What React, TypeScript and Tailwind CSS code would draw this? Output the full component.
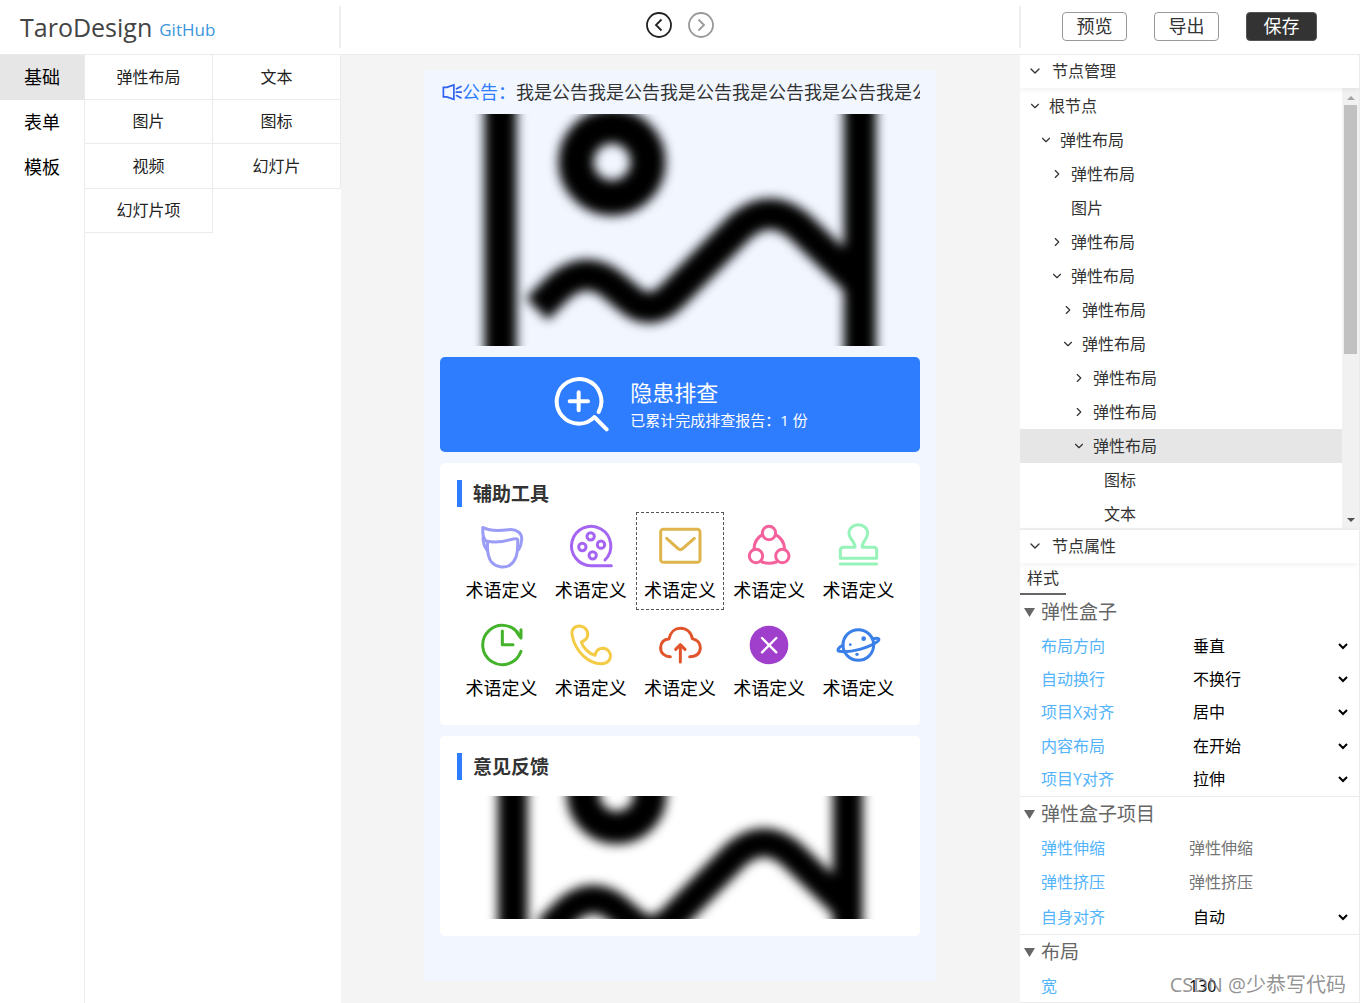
import React, { useId, useState } from 'react';
import { ChevronDown, ChevronRight } from 'lucide-react';

const categories = ['基础', '表单', '模板'];
const components = ['弹性布局', '文本', '图片', '图标', '视频', '幻灯片', '幻灯片项'];

type Node = { label: string; level: number; state?: 'open' | 'closed' };

const tree: Node[] = [
  { label: '根节点', level: 0, state: 'open' },
  { label: '弹性布局', level: 1, state: 'open' },
  { label: '弹性布局', level: 2, state: 'closed' },
  { label: '图片', level: 2 },
  { label: '弹性布局', level: 2, state: 'closed' },
  { label: '弹性布局', level: 2, state: 'open' },
  { label: '弹性布局', level: 3, state: 'closed' },
  { label: '弹性布局', level: 3, state: 'open' },
  { label: '弹性布局', level: 4, state: 'closed' },
  { label: '弹性布局', level: 4, state: 'closed' },
  { label: '弹性布局', level: 4, state: 'open' },
  { label: '图标', level: 5 },
  { label: '文本', level: 5 },
];

const indents = ['pl-2', 'pl-[19px]', 'pl-[30px]', 'pl-[41px]', 'pl-[52px]', 'pl-[63px]'];

function ToolIcon({ view, color, children }: { view: string; color: string; children: React.ReactNode }) {
  return (
    <svg
      viewBox={view}
      className="size-11 overflow-visible"
      fill="none"
      stroke={color}
      strokeWidth="9"
      strokeLinecap="round"
      strokeLinejoin="round"
      aria-hidden="true"
    >
      {children}
    </svg>
  );
}

const tools = [
  <ToolIcon key="head" view="117 165 132 132" color="#9a9cf6">
    <path d="M126 173C148 184 178 182 202 179C228 176 244 191 242 209C241 222 239 230 233 239" />
    <path d="M126 173C124 190 126 204 135 213C160 219 188 215 208 209Q229 204 230 209" />
    <path d="M140 215C138 240 140 262 152 277C165 292 190 295 206 286C223 274 232 255 230 209" />
    <path d="M126 202C126 220 130 230 138 240" />
  </ToolIcon>,
  <ToolIcon key="film" view="385 165 132 132" color="#a565f2">
    <path d="M493 270A59 59 0 1 0 453 287H512" />
    <circle cx="450" cy="199" r="11" />
    <circle cx="425" cy="231" r="11" />
    <circle cx="481" cy="224" r="11" />
    <circle cx="456" cy="256" r="11" />
  </ToolIcon>,
  <ToolIcon key="mail" view="653 165 132 132" color="#dfb44d">
    <rect x="661" y="178" width="118" height="99" rx="8" />
    <path d="M679 205L713 236Q720 242 727 236L762 205" />
  </ToolIcon>,
  <ToolIcon key="share" view="202 165 132 132" color="#f4629d">
    <circle cx="268" cy="189" r="20" />
    <circle cx="229" cy="258" r="20" />
    <circle cx="308" cy="258" r="20" />
    <path d="M248 194Q224 208 223 237M288 194Q313 208 315 237M247 276Q268 284 290 276" />
  </ToolIcon>,
  <ToolIcon key="stamp" view="470 165 132 132" color="#97f3ba">
    <path d="M527 232H492Q483 232 483 241V265H592V241Q592 232 583 232H549C547 214 565 208 565 190A28 26 0 0 0 509 190C509 208 528 214 527 232" />
    <path d="M483 282H592" />
  </ToolIcon>,
  <ToolIcon key="clock" view="117 39 132 132" color="#44b32b">
    <path d="M240 124A59 59 0 1 1 236 77" />
    <path d="M240 59V84L228 68" />
    <path d="M184 63V104H216" />
  </ToolIcon>,
  <ToolIcon key="phone" view="385 39 132 132" color="#f4cb45">
    <path d="M395 78C390 58 402 48 417 48C434 49 445 66 440 80C436 92 426 93 422 96C426 112 445 132 463 136C466 122 476 115 487 115C503 116 511 129 509 142C506 156 494 161 482 161C445 162 404 125 395 78Z" />
  </ToolIcon>,
  <ToolIcon key="cloud" view="653 39 132 132" color="#e1552d">
    <path d="M690 140C672 140 660 128 661 112C662 97 672 88 686 87C690 66 704 55 720 55C738 55 752 66 756 86C772 90 780 101 780 114C779 131 768 140 748 140" />
    <path d="M720 156V104M706 118L720 104L734 118" />
  </ToolIcon>,
  <ToolIcon key="close" view="202 39 132 132" color="#ffffff">
    <circle cx="268" cy="105" r="58" fill="#a03fcb" stroke="none" />
    <path d="M247 84L290 127M290 84L247 127" strokeWidth="7" />
  </ToolIcon>,
  <ToolIcon key="planet" view="470 39 132 132" color="#3a80e8">
    <circle cx="537" cy="105" r="46" />
    <path d="M491 106C476 112 472 122 480 124C512 130 572 112 595 94C604 86 596 82 580 87" />
    <g fill="#3a80e8" stroke="none">
      <circle cx="553" cy="86" r="7" />
      <circle cx="513" cy="104" r="4" />
      <circle cx="533" cy="133" r="5" />
    </g>
  </ToolIcon>,
];

function SoftPicture({ view, className }: { view: string; className: string }) {
  const id = useId();
  return (
    <svg viewBox={view} preserveAspectRatio="xMidYMid slice" className={className} role="img" aria-label="图片">
      <filter id={id} x="-50" y="-50" width="580" height="340" filterUnits="userSpaceOnUse">
        <feGaussianBlur stdDeviation="5.5" />
      </filter>
      <g filter={`url(#${id})`} fill="none" stroke="#000">
        <path d="M60.5 -40V280M420 -40V280" strokeWidth="32" />
        <circle cx="172" cy="48" r="36" strokeWidth="35" />
        <path
          d="M97 195L118 174Q147 148 176 174L188 184Q210 204 232 182L300 113Q330 87 360 113L415 166"
          strokeWidth="31"
          strokeLinejoin="round"
        />
      </g>
    </svg>
  );
}

function CardTitle({ children }: { children: string }) {
  return (
    <h2 className="h-[27px] border-l-[5px] border-[#2f7dff] pl-[11px] text-[19px] leading-[29px] font-bold text-[#333]">
      {children}
    </h2>
  );
}

function Phone() {
  const [selected, setSelected] = useState(2);
  return (
    <div className="mx-auto mt-[15px] w-full max-w-[512px] bg-[#f1f6ff] px-4 pb-[45px]">
      <div className="flex h-11 items-center overflow-hidden text-lg whitespace-nowrap text-[#333]">
        <svg viewBox="62 62 62 62" className="ml-px size-[21px] shrink-0" fill="none" stroke="#2f62f0" strokeWidth="5" strokeLinecap="round" aria-hidden="true">
          <path d="M69 78H79L100 71V113L79 106H69ZM107 92H122M108 82L121 75M108 102L121 109" />
        </svg>
        <span className="text-[#2f7dff]">公告：</span>
        <span className="overflow-hidden">我是公告我是公告我是公告我是公告我是公告我是公告</span>
      </div>
      <SoftPicture view="0 0 480 232" className="block h-[232px] w-full" />

      <div className="mt-[11px] flex h-[95px] items-center justify-center gap-5 rounded-[5px] bg-[#2f7dff] pb-0.5 pl-0.5 text-white">
        <svg viewBox="375 78 168 168" className="size-14" fill="none" stroke="#fff" strokeWidth="12" strokeLinecap="round" strokeLinejoin="round" aria-hidden="true">
          <path d="M509 186A67 67 0 1 0 450 221Q478 221 496 201L533 238" />
          <path d="M422 154H477M449 127V181" />
        </svg>
        <div>
          <p className="text-[22px] leading-8">隐患排查</p>
          <p className="text-[15px] leading-6">已累计完成排查报告：1 份</p>
        </div>
      </div>

      <section className="mt-[11px] rounded-[5px] bg-white p-[17px]">
        <CardTitle>辅助工具</CardTitle>
        <div className="mt-[5px] grid grid-cols-5">
          {tools.map((icon, i) => (
            <button
              key={i}
              type="button"
              onClick={() => setSelected(i)}
              className={`mx-px flex h-[98px] flex-col items-center border border-dashed pt-3 text-lg ${
                selected === i ? 'border-[#555]' : 'border-transparent'
              }`}
            >
              {icon}
              <span className="mt-2 leading-[26px] whitespace-nowrap text-black">术语定义</span>
            </button>
          ))}
        </div>
      </section>

      <section className="mt-[11px] rounded-[5px] bg-white p-[17px]">
        <CardTitle>意见反馈</CardTitle>
        <SoftPicture view="0 50 480 132" className="mt-4 block h-[123px] w-full" />
      </section>
    </div>
  );
}

function PanelHeader({ children }: { children: string }) {
  return (
    <button type="button" className="relative flex h-[33px] w-full shrink-0 items-center gap-[9px] bg-white pb-0.5 pl-[7px] text-base text-[#333] shadow-[0_1px_6px_rgba(0,0,0,0.08)]">
      <ChevronDown className="size-4" strokeWidth={2} />
      {children}
    </button>
  );
}

function NodeTree() {
  const [active, setActive] = useState(10);
  return (
    <div className="flex h-[440px] shrink-0 overflow-hidden">
      <ul className="flex-1 pt-px">
        {tree.map((n, i) => (
          <li key={i}>
            <button
              type="button"
              onClick={() => setActive(i)}
              className={`flex h-[34px] w-full items-center gap-[7px] text-base text-[#333] ${indents[n.level]} ${
                active === i ? 'bg-[#e6e6e6]' : ''
              }`}
            >
              <span className="w-3.5">
                {n.state === 'open' && <ChevronDown className="size-3.5" strokeWidth={2} />}
                {n.state === 'closed' && <ChevronRight className="size-3.5" strokeWidth={2} />}
              </span>
              {n.label}
            </button>
          </li>
        ))}
      </ul>
      <div className="flex w-[17px] flex-col items-center bg-[#f1f1f1] py-1.5" aria-hidden="true">
        <svg viewBox="0 0 8 4" className="mt-0.5 h-1 w-2"><path d="M0 4L4 0L8 4Z" fill="#a3a3a3" /></svg>
        <div className="mt-[5px] h-[249px] w-[13px] bg-[#c1c1c1]" />
        <svg viewBox="0 0 8 4" className="mt-auto h-1 w-2"><path d="M0 0L4 4L8 0Z" fill="#505050" /></svg>
      </div>
    </div>
  );
}

function GroupTitle({ children }: { children: string }) {
  return (
    <h3 className="flex h-[34px] items-center gap-1.5 pl-1 text-[19px] text-[#666]">
      <svg viewBox="0 0 11 9" className="h-[9px] w-[11px]"><path d="M0 0H11L5.5 9Z" fill="#666" /></svg>
      {children}
    </h3>
  );
}

function Field({ id, label, option, value, placeholder }: { id: string; label: string; option?: string; value?: string; placeholder?: string }) {
  return (
    <div className="flex items-center pr-2 pl-[21px] text-base">
      <label htmlFor={id} className="w-[148px] shrink-0 text-[#53b4fb]">{label}</label>
      {option ? (
        <select id={id} className="min-w-0 flex-1 bg-white text-black">
          <option>{option}</option>
        </select>
      ) : (
        <input id={id} defaultValue={value} placeholder={placeholder} className="min-w-0 flex-1 text-black placeholder:text-[#757575]" />
      )}
    </div>
  );
}

export default function App() {
  const [cat, setCat] = useState(0);
  return (
    <div className="relative flex h-screen flex-col overflow-hidden bg-white font-['Open_Sans','Noto_Sans_CJK_SC',sans-serif]">
      <header className="flex h-[55px] shrink-0 border-b border-[#ebebeb]">
        <div className="my-1.5 flex w-[341px] items-center border-r-2 border-[#ededed] pl-5">
          <h1 className="text-[25px] leading-10 text-[#444]">TaroDesign</h1>
          <a href="#github" className="mt-1.5 ml-[7px] text-[17px] text-[#3a96dd]">GitHub</a>
        </div>
        <div className="flex flex-1 items-start justify-center gap-4 pt-3">
          <button type="button" aria-label="后退" className="text-[#222]">
            <svg viewBox="0 0 26 26" className="size-[26px]" fill="none" stroke="currentColor" strokeWidth="1.8">
              <circle cx="13" cy="13" r="12" />
              <path d="M15.5 7.5L10 13L15.5 18.5" />
            </svg>
          </button>
          <button type="button" aria-label="前进" className="text-[#999]">
            <svg viewBox="0 0 26 26" className="size-[26px]" fill="none" stroke="currentColor" strokeWidth="1.8">
              <circle cx="13" cy="13" r="12" />
              <path d="M10.5 7.5L16 13L10.5 18.5" />
            </svg>
          </button>
        </div>
        <div className="my-1.5 flex w-[341px] items-center justify-center gap-[27px] border-l-2 border-[#ededed] pr-0.5 pb-px text-lg leading-[27px] text-[#333]">
          <button type="button" className="w-[65px] rounded-[4px] border border-[#999]">预览</button>
          <button type="button" className="w-[65px] rounded-[4px] border border-[#999]">导出</button>
          <button type="button" className="w-[71px] rounded-[4px] border border-[#555] bg-[#333] text-white">保存</button>
        </div>
      </header>

      <div className="flex min-h-0 flex-1">
        <nav className="flex w-[85px] shrink-0 flex-col border-r border-[#ebebeb]">
          {categories.map((c, i) => (
            <button
              key={c}
              type="button"
              onClick={() => setCat(i)}
              className={`h-[45px] pb-0.5 text-lg text-black ${cat === i ? 'bg-[#e6e6e6]' : ''}`}
            >
              {c}
            </button>
          ))}
        </nav>
        <div className="w-64 shrink-0">
          <div className="grid h-[178px] grid-cols-2 grid-rows-4">
            {components.map((c) => (
              <button key={c} type="button" className="border-r border-b border-[#ebebeb] text-base text-[#222]">
                {c}
              </button>
            ))}
          </div>
        </div>

        <main className="min-w-0 flex-1 overflow-y-auto bg-[#f4f4f4] pr-px">
          <Phone />
        </main>

        <aside className="flex w-[340px] shrink-0 flex-col overflow-hidden border-r border-[#ebebeb]">
          <PanelHeader>节点管理</PanelHeader>
          <NodeTree />
          <div className="h-0.5 shrink-0 bg-[#f1f1f1]" />
          <PanelHeader>节点属性</PanelHeader>
          <div className="shrink-0">
            <button type="button" className="block h-8 w-[46px] border-b-2 border-[#666] text-base leading-[30px] text-[#333]">样式</button>
          </div>
          <section className="shrink-0 border-b border-[#ebebeb]">
            <GroupTitle>弹性盒子</GroupTitle>
            <div className="grid h-[167px] grid-cols-1 grid-rows-5">
              <Field id="direction" label="布局方向" option="垂直" />
              <Field id="wrap" label="自动换行" option="不换行" />
              <Field id="justify" label="项目X对齐" option="居中" />
              <Field id="content" label="内容布局" option="在开始" />
              <Field id="items" label="项目Y对齐" option="拉伸" />
            </div>
          </section>
          <section className="shrink-0 border-b border-[#ebebeb]">
            <GroupTitle>弹性盒子项目</GroupTitle>
            <div className="grid h-[103px] grid-cols-1 grid-rows-3">
              <Field id="grow" label="弹性伸缩" placeholder="弹性伸缩" />
              <Field id="shrink" label="弹性挤压" placeholder="弹性挤压" />
              <Field id="self" label="自身对齐" option="自动" />
            </div>
          </section>
          <section className="shrink-0 border-b border-[#ebebeb]">
            <GroupTitle>布局</GroupTitle>
            <div className="grid h-[33px] grid-cols-1">
              <Field id="width" label="宽" value="130" />
            </div>
          </section>
        </aside>
      </div>

      <p className="pointer-events-none absolute right-3.5 bottom-1 text-xl leading-7 whitespace-nowrap text-[#777]/80">CSDN @少恭写代码</p>
    </div>
  );
}
